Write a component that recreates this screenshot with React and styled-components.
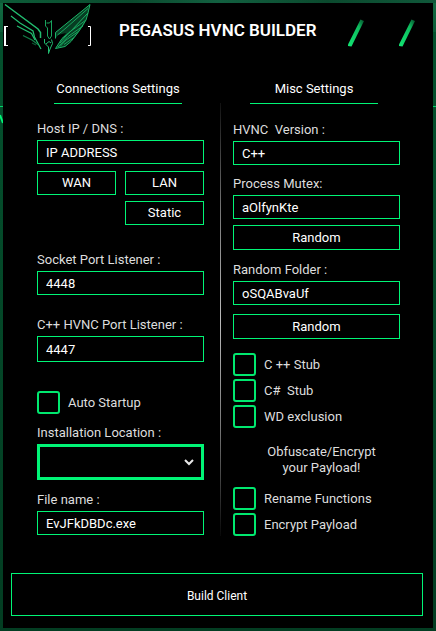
import React from "react";
import styled, { createGlobalStyle } from "styled-components";

const GREEN = "#00f576";

const GlobalStyle = createGlobalStyle`
  * { box-sizing: border-box; }
  body {
    margin: 0;
    background: #000;
    color: #fff;
    font-family: Roboto, "Liberation Sans", sans-serif;
    font-size: 14px;
    line-height: 16px;
  }
  button, input, select { font: inherit; color: inherit; }
`;

const Frame = styled.div`
  position: relative;
  min-height: 100vh;
  padding: 3px;
  display: flex;
  background:
    linear-gradient(90deg, #0d5c38, #0b4a2e 30%, #126040 50%, #0b4a2e 75%, #10583a) top / 100% 3px no-repeat,
    linear-gradient(#126b42, #0c5c38) top / 100% 32px no-repeat,
    linear-gradient(#00d468, #00d468) 0 106px / 100% 1px no-repeat,
    linear-gradient(#04522e, #033d22);
`;

const EdgeMark = styled.svg`
  position: absolute;
  left: 0;
  top: 114px;
`;

const Panel = styled.main`
  flex: 1;
  display: flex;
  flex-direction: column;
  background: #000;
`;

const Header = styled.header`
  display: flex;
  align-items: flex-start;
  height: 78px;
  padding: 0 18px 0 0;
`;

const Logo = styled.svg`
  flex: none;
  width: 90px;
  height: 54px;
`;

const Title = styled.h1`
  flex: 1;
  margin: 17px 0 0 26px;
  font-size: 17px;
  line-height: 20px;
  font-weight: 600;
  white-space: nowrap;
`;

const WindowButtons = styled.div`
  display: flex;
  gap: 35px;
  padding-top: 16px;
`;

const WindowButton = styled.button`
  display: block;
  width: 16px;
  height: 28px;
  padding: 0;
  border: 0;
  background: none;
`;

const Columns = styled.div`
  display: grid;
  grid-template-columns: 1fr auto 1fr;
  padding: 0 33px 0 34px;
`;

const Column = styled.section`
  display: flex;
  flex-direction: column;
  min-width: 0;
`;

const Divider = styled.div`
  width: 1px;
  margin: 22px 12px 0 16px;
  background: linear-gradient(#111, #777 25%, #bbb 50%, #777 75%, #080808);
`;

const SectionTitle = styled.h2`
  width: 128px;
  margin: 0 0 0 17px;
  padding-bottom: 6px;
  border-bottom: 1px solid ${GREEN};
  font-size: 13px;
  font-weight: 400;
  text-align: center;
  white-space: nowrap;
`;

const Field = styled.div`
  display: flex;
  flex-direction: column;
  gap: 3px;
  margin-top: ${(p) => p.$space}px;
`;

const Label = styled.label`
  font-size: 13px;
  color: #ddd;
  white-space: pre;
`;

const TextInput = styled.input`
  width: 100%;
  height: ${(p) => (p.$tall ? 26 : 24)}px;
  padding: 0 8px;
  border: 1px solid ${GREEN};
  border-radius: 0;
  background: #000;
  font-size: 13px;
  outline: none;
`;

const SelectWrap = styled.div`
  display: grid;
  align-items: center;
  > * { grid-area: 1 / 1; }
`;

const Select = styled.select`
  appearance: none;
  width: 100%;
  height: 36px;
  border: 3px solid ${GREEN};
  border-radius: 0;
  background: #000;
  outline: none;
`;

const Chevron = styled.svg`
  justify-self: end;
  margin-right: 10px;
  pointer-events: none;
`;

const Button = styled.button`
  height: ${(p) => p.$height || 24}px;
  padding: 0;
  border: 1px solid ${GREEN};
  background: #000;
  font-size: 13px;
`;

const BuildButton = styled(Button)`
  font-size: 12px;
  padding-top: 2px;
`;

const ButtonGrid = styled.div`
  display: grid;
  grid-template-columns: 1fr 1fr;
  gap: 6px 9px;
  margin-top: 7px;
  > :last-child { grid-column: 2; }
`;

const ActionRow = styled.div`
  display: grid;
  margin-top: ${(p) => p.$space}px;
`;

const CheckLabel = styled.label`
  display: flex;
  align-items: center;
  gap: 8px;
  height: 23px;
  font-size: 13px;
  color: #ddd;
  white-space: pre;
`;

const CheckBox = styled.input`
  appearance: none;
  flex: none;
  width: 23px;
  height: 23px;
  margin: 0;
  border: 2px solid #00e86f;
  border-radius: 3px;
  background: #000;
`;

const CheckGroup = styled.div`
  display: grid;
  gap: 3px;
  margin-top: ${(p) => p.$space}px;
`;

const Note = styled.p`
  width: 115px;
  margin: 16px 0 0 31px;
  font-size: 13px;
  color: #ddd;
  text-align: center;
  white-space: nowrap;
`;

const Footer = styled.footer`
  display: grid;
  padding: 37px 10px 12px 8px;
`;

function Input({ id, label, value, space, tall }) {
  return (
    <Field $space={space}>
      <Label htmlFor={id}>{label}</Label>
      <TextInput id={id} defaultValue={value} $tall={tall} spellCheck={false} />
    </Field>
  );
}

function Check({ label }) {
  return (
    <CheckLabel>
      <CheckBox type="checkbox" />
      {label}
    </CheckLabel>
  );
}

function Slash({ label }) {
  return (
    <WindowButton type="button" aria-label={label}>
      <svg width="16" height="28" viewBox="0 0 16 28">
        <defs>
          <linearGradient id={label} x1="0" y1="1" x2="1" y2="0">
            <stop offset="0" stopColor="#12e673" />
            <stop offset="0.7" stopColor="#0dbb5e" />
            <stop offset="1" stopColor="#064a29" />
          </linearGradient>
        </defs>
        <path d="M0 25.5 12.5 0.5 16 2 3.500 27.500 0 27Z" fill={`url(#${label})`} />
      </svg>
    </WindowButton>
  );
}

function WingLogo() {
  return (
    <Logo viewBox="3 3 90 54" fill="none" stroke="#18a45d" strokeWidth="1" role="img" aria-label="Pegasus">
      <g stroke="#22bd70" strokeWidth="1.2">
        <path d="M5 4.500 38 29 40.500 32.500V38" strokeWidth="1.5" />
        <path d="M11 16 20 23 33 31 34.500 37 41 49" />
        <path d="M17 26 31.500 33.500 35 40" />
        <path d="M23 35.500 32 40 38 44.500" stroke="#128048" />
        <path d="M32 43 36 45" stroke="#0c5834" />
      </g>
      <path d="M45.500 20 V26 L47.500 28 V36 L49.500 39 51.500 36 V20.500 L49.500 23 H46.500" />
      <path d="M44.500 39 V43 L48.500 47 V53.500 L50 49 52.500 43.500 51.500 39.500 M46 44 49 41.500 51 43" stroke="#22bd70" />
      <path d="M90 4.500 55.500 32.500 V38.500 L58 35 66 33 62 38 55.500 48.500 65 46.500 75 37 84 25 88 12Z" fill="#073d23" stroke="none" />
      <path d="M90 4.500 55.500 32.500 V38.500 M90 4.500 88 13 86 20 79 31 71 41.500 65 46.500 55.500 48.500 62 38.500 70 32 88 13" stroke="#1cb467" />
      <path d="M88 8.500 66 28 57.500 35 M86 20 69 32.500 60 43 M83 26 68 36.500 58 47 M79 31 66 40 60 46.500 M74 37.500 64 44.500" />
      <path d="M8 26.500H5M8 45.500H5M88 26.500H90.500V45.500H88" stroke="#fff" />
      <path d="M5 26V46" stroke="#fff" strokeWidth="2" />
    </Logo>
  );
}

export default function App() {
  return (
    <>
      <GlobalStyle />
      <Frame>
        <EdgeMark width="3" height="10" viewBox="0 0 3 10" aria-hidden="true">
          <path d="M0 1 3 9" stroke={GREEN} strokeWidth="2" />
        </EdgeMark>
        <Panel>
          <Header>
            <WingLogo />
            <Title>PEGASUS HVNC BUILDER</Title>
            <WindowButtons>
              <Slash label="Minimize" />
              <Slash label="Close" />
            </WindowButtons>
          </Header>
          <Columns>
            <Column>
              <SectionTitle>Connections Settings</SectionTitle>
              <Input id="host" label="Host IP / DNS :" value="IP ADDRESS" space={17} />
              <ButtonGrid>
                <Button type="button">WAN</Button>
                <Button type="button">LAN</Button>
                <Button type="button">Static</Button>
              </ButtonGrid>
              <Input id="socket" label="Socket Port Listener :" value="4448" space={27} />
              <Input id="port" label="C++ HVNC Port Listener :" value="4447" space={22} tall />
              <CheckGroup $space={29}>
                <Check label="Auto Startup" />
              </CheckGroup>
              <Field $space={11}>
                <Label htmlFor="location">Installation Location :</Label>
                <SelectWrap>
                  <Select id="location" />
                  <Chevron width="10" height="8" viewBox="0 0 10 8" aria-hidden="true">
                    <path d="M1 2 5 6 9 2" fill="none" stroke="#e8e8e8" strokeWidth="2" />
                  </Chevron>
                </SelectWrap>
              </Field>
              <Input id="file" label="File name :" value="EvJFkDBDc.exe" space={12} />
            </Column>
            <Divider />
            <Column>
              <SectionTitle>Misc Settings</SectionTitle>
              <Input id="version" label="HVNC  Version :" value="C++" space={18} />
              <Input id="mutex" label="Process Mutex:" value="aOlfynKte" space={11} />
              <ActionRow $space={6}>
                <Button type="button" $height={25}>Random</Button>
              </ActionRow>
              <Input id="folder" label="Random Folder :" value="oSQABvaUf" space={12} />
              <ActionRow $space={9}>
                <Button type="button" $height={25}>Random</Button>
              </ActionRow>
              <CheckGroup $space={14}>
                <Check label="C ++ Stub" />
                <Check label="C#  Stub" />
                <Check label="WD exclusion" />
              </CheckGroup>
              <Note>
                Obfuscate/Encrypt
                <br />
                your Payload!
              </Note>
              <CheckGroup $space={11}>
                <Check label="Rename Functions" />
                <Check label="Encrypt Payload" />
              </CheckGroup>
            </Column>
          </Columns>
          <Footer>
            <BuildButton type="button" $height={43}>Build Client</BuildButton>
          </Footer>
        </Panel>
      </Frame>
    </>
  );
}
